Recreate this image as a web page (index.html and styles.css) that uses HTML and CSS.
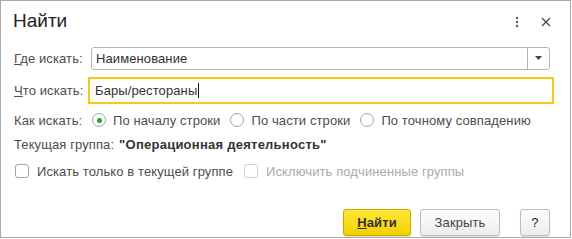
FILE: index.html
```html
<!DOCTYPE html>
<html lang="ru">
<head>
<meta charset="utf-8">
<link rel="stylesheet" href="styles.css">
</head>
<body>
<div class="window">
  <div class="header">
    <div class="title">Найти</div>
    <div class="head-icons">
      <svg class="more" width="4" height="12" viewBox="0 0 4 12"><circle cx="2" cy="2" r="1.3"/><circle cx="2" cy="6" r="1.3"/><circle cx="2" cy="10" r="1.3"/></svg>
      <svg class="close" width="10" height="10" viewBox="0 0 10 10"><path d="M1 1L9 9M9 1L1 9"/></svg>
    </div>
  </div>
  <div class="form">
    <div class="row row-where">
      <div class="label"><u>Г</u>де искать:</div>
      <div class="field select">
        <span class="value">Наименование</span>
        <span class="drop"><svg width="7" height="4" viewBox="0 0 7 4"><path d="M0 0H7L3.5 4Z"/></svg></span>
      </div>
    </div>
    <div class="row row-what">
      <div class="label"><u>Ч</u>то искать:</div>
      <div class="field focus"><span class="value">Бары/рестораны</span><span class="caret"></span></div>
    </div>
    <div class="row row-how">
      <div class="label">Как искать:</div>
      <div class="radios">
        <span class="opt"><span class="radio on"></span>По началу строки</span>
        <span class="opt"><span class="radio"></span>По части строки</span>
        <span class="opt"><span class="radio"></span>По точному совпадению</span>
      </div>
    </div>
    <div class="row row-group">
      <span class="label-auto">Текущая группа:</span>
      <span class="group">"Операционная деятельность"</span>
    </div>
    <div class="row row-checks">
      <span class="opt"><span class="check"></span>Искать только в текущей группе</span>
      <span class="opt disabled"><span class="check"></span>Исключить подчиненные группы</span>
    </div>
    <div class="footer">
      <button class="btn primary"><u>Н</u>айти</button>
      <button class="btn">Закрыть</button>
      <button class="btn help">?</button>
    </div>
  </div>
</div>
</body>
</html>
```

FILE: styles.css
```css
html, body {
  margin: 0;
  padding: 0;
  background: #fff;
}
body {
  font-family: "Liberation Sans", Arial, sans-serif;
  font-size: 13px;
  letter-spacing: 0.1px;
  color: #4d4d4d;
}
.window {
  width: 569px;
  height: 236px;
  border: 1px solid #a9a9a9;
  background: #fff;
  display: flex;
  flex-direction: column;
}
.header {
  height: 39px;
  display: flex;
  align-items: center;
  padding-left: 12px;
}
.title {
  font-size: 19px;
  letter-spacing: 0;
  color: #222;
  flex: 1;
  margin-top: 1px;
}
.head-icons {
  display: flex;
  align-items: center;
  margin-right: 19px;
  margin-top: 2px;
}
.more {
  fill: #666;
  margin-right: 22px;
}
.close path {
  stroke: #444;
  stroke-width: 1.2;
  fill: none;
}
.form {
  padding: 0 20px 0 12px;
  display: flex;
  flex-direction: column;
}
.row {
  display: flex;
  align-items: center;
}
.label {
  width: 77px;
  flex: none;
  margin-left: 1px;
  white-space: nowrap;
}
.row-where { height: 36px; }
.row-what { height: 29px; }
.row-how { height: 30px; }
.row-group { height: 18px; }
.row-checks { height: 36px; }
.field {
  flex: 1;
  box-sizing: border-box;
  display: flex;
  align-items: center;
  color: #333;
}
.select {
  height: 23px;
  border: 1px solid #b5b5b5;
  border-radius: 3px;
  padding-left: 4px;
}
.select .value { flex: 1; }
.drop {
  width: 21px;
  height: 100%;
  border-left: 1px solid #b5b5b5;
  display: flex;
  align-items: center;
  justify-content: center;
}
.drop svg { fill: #444; }
.focus {
  height: 27px;
  border: 2px solid #f6c913;
  margin: 0 -4px 0 -3px;
  padding-left: 5px;
}
.caret {
  width: 1px;
  height: 15px;
  background: #111;
  margin-left: 1px;
}
.radios {
  display: flex;
  align-items: center;
  gap: 10px;
  margin-left: 1px;
}
.opt {
  display: inline-flex;
  align-items: center;
  white-space: nowrap;
}
.radio {
  width: 14px;
  height: 14px;
  box-sizing: border-box;
  border: 1px solid #a3a3a3;
  border-radius: 50%;
  margin-right: 7px;
  display: inline-flex;
  align-items: center;
  justify-content: center;
  background: #fff;
}
.radio.on::after {
  content: "";
  width: 5px;
  height: 5px;
  border-radius: 50%;
  background: #26a14b;
}
.label-auto {
  margin-left: 1px;
  margin-right: 5px;
}
.group {
  font-weight: bold;
  letter-spacing: 0.25px;
  color: #333;
}
.row-checks {
  gap: 11px;
}
.check {
  width: 14px;
  height: 14px;
  box-sizing: border-box;
  border: 1px solid #a3a3a3;
  border-radius: 3px;
  margin-right: 8px;
  margin-left: 2px;
  background: #fff;
}
.disabled { color: #aaa; }
.disabled .check {
  border-color: #cfcfcf;
  margin-left: 0;
}
.footer {
  display: flex;
  justify-content: flex-end;
  margin-top: 20px;
}
.btn {
  height: 27px;
  box-sizing: border-box;
  font-family: "Liberation Sans", Arial, sans-serif;
  font-size: 13px;
  letter-spacing: 0.1px;
  color: #444;
  border: 1px solid #bcbcbc;
  border-radius: 3px;
  background: linear-gradient(#ffffff, #ececec);
  padding: 0;
  margin-left: 9px;
  width: 80px;
  box-shadow: 0 1px 1px rgba(0,0,0,0.12);
}
.primary {
  width: 68px;
  font-weight: bold;
  color: #333;
  border-color: #c9a900;
  background: linear-gradient(#ffe83a, #f4d000);
}
.help {
  width: 30px;
  margin-left: 20px;
  color: #222;
}
```
